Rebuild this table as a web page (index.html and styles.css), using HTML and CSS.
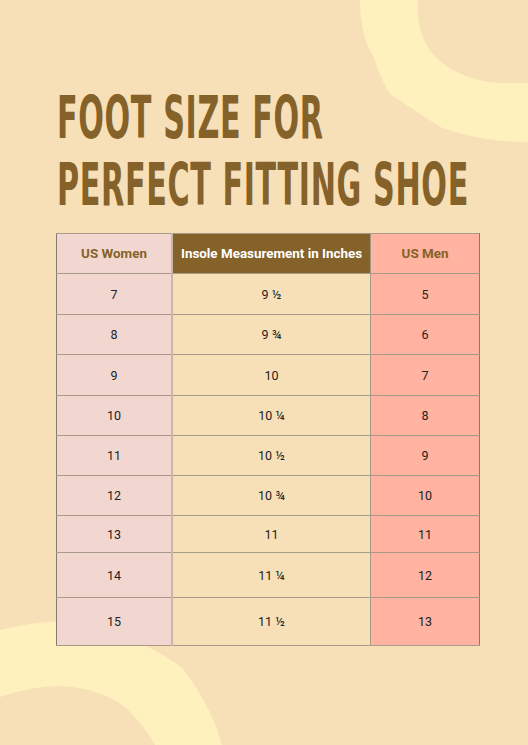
FILE: index.html
```html
<!DOCTYPE html>
<html>
<head>
<meta charset="utf-8">
<link rel="stylesheet" href="styles.css">
</head>
<body>
<div class="page">
  <svg class="deco deco-tr" width="528" height="160" viewBox="0 0 528 160">
    <path d="M360,0 C360,20 365,45 373,55 C378,70 384,85 390,94 L440,127 C470,138 500,142 528,142 L528,0 Z" fill="#FEF1BD"/>
    <path d="M418,0 C416,30 425,50 445,65 C460,76 480,82 500,83 L528,83 L528,0 Z" fill="#F7E0B7"/>
  </svg>
  <svg class="deco deco-bl" width="240" height="130" viewBox="0 615 240 130">
    <path d="M0,630 C20,625 40,622 60,621 C100,622 130,638 150,648 C165,656 175,662 182,668 C198,688 214,715 222,745 L0,745 Z" fill="#FEF1BD"/>
    <path d="M0,697 C20,690 40,686 62,686 C95,688 120,700 132,714 C142,725 150,735 155,745 L0,745 Z" fill="#F7E0B7"/>
  </svg>
  <h1 class="title"><span class="line">Foot Size For</span><span class="line">Perfect Fitting Shoe</span></h1>
  <table class="chart">
    <thead>
      <tr><th class="c1">US Women</th><th class="c2">Insole Measurement in Inches</th><th class="c3">US Men</th></tr>
    </thead>
    <tbody>
      <tr class="r41"><td class="c1">7</td><td class="c2">9 ½</td><td class="c3">5</td></tr>
      <tr class="r40"><td class="c1">8</td><td class="c2">9 ¾</td><td class="c3">6</td></tr>
      <tr class="r41"><td class="c1">9</td><td class="c2">10</td><td class="c3">7</td></tr>
      <tr class="r40"><td class="c1">10</td><td class="c2">10 ¼</td><td class="c3">8</td></tr>
      <tr class="r40"><td class="c1">11</td><td class="c2">10 ½</td><td class="c3">9</td></tr>
      <tr class="r40"><td class="c1">12</td><td class="c2">10 ¾</td><td class="c3">10</td></tr>
      <tr class="r37"><td class="c1">13</td><td class="c2">11</td><td class="c3">11</td></tr>
      <tr class="r45"><td class="c1">14</td><td class="c2">11 ¼</td><td class="c3">12</td></tr>
      <tr class="r48"><td class="c1">15</td><td class="c2">11 ½</td><td class="c3">13</td></tr>
    </tbody>
  </table>
</div>
</body>
</html>
```
FILE: styles.css
```css
html, body {
  margin: 0;
  padding: 0;
  background: #F7E0B7;
}
.page {
  position: relative;
  width: 528px;
  height: 745px;
  overflow: hidden;
  background: #F7E0B7;
  padding-top: 1px;
  box-sizing: border-box;
}
.deco {
  position: absolute;
  display: block;
  z-index: 0;
}
.deco-tr { top: 0; left: 0; }
.deco-bl { left: 0; top: 615px; }
.title {
  position: relative;
  z-index: 1;
  margin: 83px 0 0 57px;
  font-family: "DejaVu Sans Condensed", "DejaVu Sans", sans-serif;
  font-stretch: condensed;
  font-weight: bold;
  font-size: 56px;
  line-height: 67px;
  color: #85622A;
  text-transform: uppercase;
  letter-spacing: 1px;
}
.title .line {
  display: block;
  width: max-content;
  white-space: nowrap;
  transform-origin: left center;
  transform: scale(0.6, 1.04);
}
.chart {
  position: relative;
  z-index: 1;
  margin: 15px 0 0 56px;
  border-collapse: collapse;
  width: 424px;
  table-layout: fixed;
  font-family: Roboto, "Liberation Sans", sans-serif;
  border: 1px solid #857a6e;
}
.chart th, .chart td {
  text-align: center;
  padding: 0;
  border: 1px solid #a89a89;
}
.chart th {
  height: 39px;
  font-size: 13.4px;
  font-weight: bold;
  color: #85622A;
}
.chart td {
  font-size: 12.5px;
  color: #222;
}
.chart .c1 { width: 114px; background: #F2D7D0; border-right: 2px solid #c9b6ab; }
.chart .c2 { width: 197px; background: #F7E0B7; }
.chart .c3 { background: #FFB3A0; }
.chart th.c2 { background: #85622A; color: #fff; }
.chart th.c1, .chart td.c1 { border-left: 1px solid #857a6e; }
.chart th.c3, .chart td.c3 { border-right: 1px solid #857a6e; }
.r41 td { height: 40px; }
.r40 td { height: 39px; }
.r37 td { height: 36px; }
.r45 td { height: 44px; }
.r48 td { height: 47px; }
```
